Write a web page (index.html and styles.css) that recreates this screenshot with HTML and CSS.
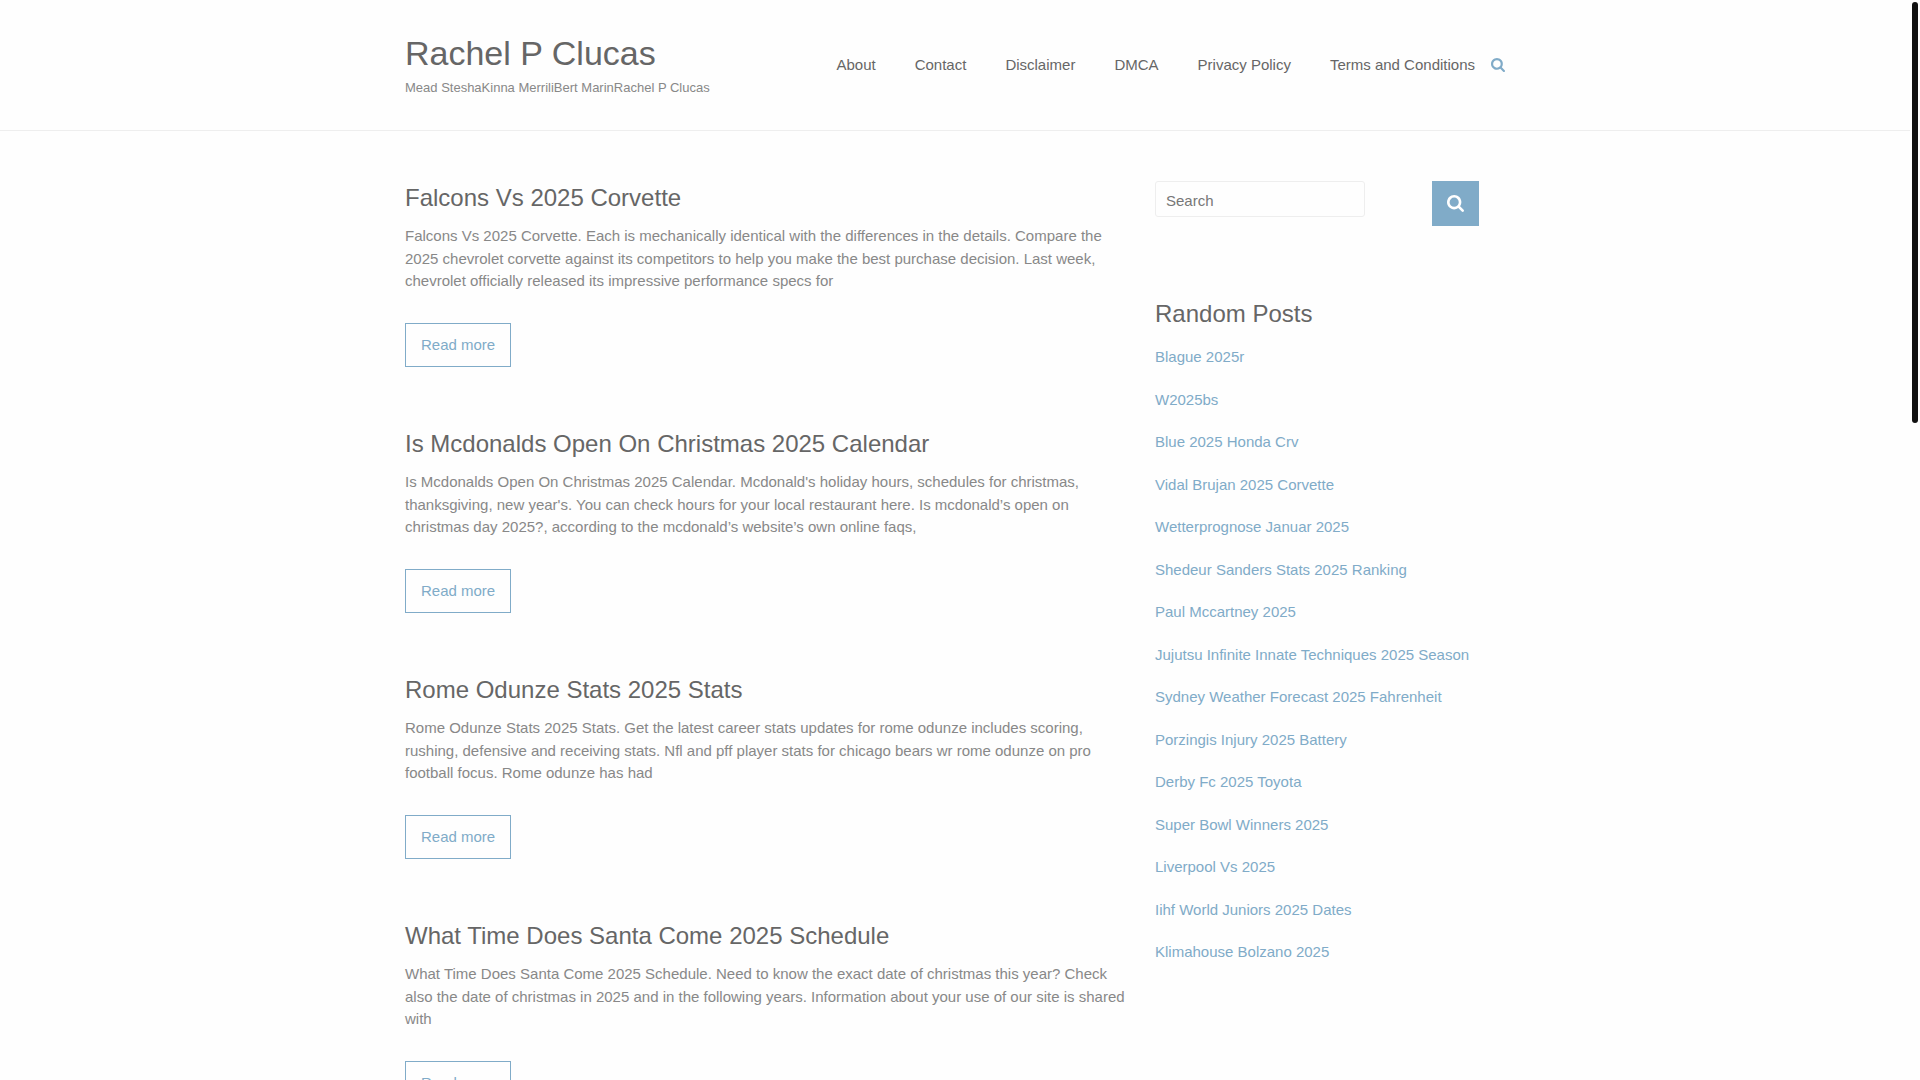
FILE: index.html
```html
<!DOCTYPE html>
<html lang="en">
<head>
<meta charset="utf-8">
<meta name="viewport" content="width=device-width, initial-scale=1">
<title>Rachel P Clucas</title>
<link rel="stylesheet" href="styles.css">
</head>
<body>
<svg class="sprite" aria-hidden="true">
  <symbol id="icon-search" viewBox="0 128 1664 1664">
    <path d="M1152 832q0-185-131.500-316.500T704 384 387.500 515.500 256 832t131.500 316.500T704 1280t316.500-131.500T1152 832zm512 832q0 52-38 90t-90 38q-54 0-90-38l-343-342q-179 124-399 124-143 0-273.500-55.500t-225-150-150-225T0 832t55.500-273.500 150-225 225-150T704 128t273.500 55.500 225 150 150 225T1408 832q0 220-124 399l343 343q37 37 37 90z"/>
  </symbol>
</svg>
<div class="page">
  <header class="site-header">
    <div class="container header-inner">
      <div class="branding">
        <h1 class="site-title"><a href="#">Rachel P Clucas</a></h1>
        <p class="site-description">Mead SteshaKinna MerriliBert MarinRachel P Clucas</p>
      </div>
      <div class="header-right">
        <nav class="main-nav" aria-label="Main">
          <a href="#">About</a>
          <a href="#">Contact</a>
          <a href="#">Disclaimer</a>
          <a href="#">DMCA</a>
          <a href="#">Privacy Policy</a>
          <a href="#">Terms and Conditions</a>
        </nav>
        <button class="search-toggle" type="button" aria-label="Open search"><svg class="icon"><use href="#icon-search"/></svg></button>
      </div>
    </div>
  </header>
  <div class="container columns">
    <main class="posts">
      <article class="post">
        <h2 class="post-title"><a href="#">Falcons Vs 2025 Corvette</a></h2>
        <p class="post-text">Falcons Vs 2025 Corvette. Each is mechanically identical with the differences in the details. Compare the 2025 chevrolet corvette against its competitors to help you make the best purchase decision. Last week, chevrolet officially released its impressive performance specs for</p>
        <a class="read-more" href="#">Read more</a>
      </article>
      <article class="post">
        <h2 class="post-title"><a href="#">Is Mcdonalds Open On Christmas 2025 Calendar</a></h2>
        <p class="post-text">Is Mcdonalds Open On Christmas 2025 Calendar. Mcdonald's holiday hours, schedules for christmas, thanksgiving, new year's. You can check hours for your local restaurant here. Is mcdonald’s open on christmas day 2025?, according to the mcdonald’s website’s own online faqs,</p>
        <a class="read-more" href="#">Read more</a>
      </article>
      <article class="post">
        <h2 class="post-title"><a href="#">Rome Odunze Stats 2025 Stats</a></h2>
        <p class="post-text">Rome Odunze Stats 2025 Stats. Get the latest career stats updates for rome odunze includes scoring, rushing, defensive and receiving stats. Nfl and pff player stats for chicago bears wr rome odunze on pro football focus. Rome odunze has had</p>
        <a class="read-more" href="#">Read more</a>
      </article>
      <article class="post">
        <h2 class="post-title"><a href="#">What Time Does Santa Come 2025 Schedule</a></h2>
        <p class="post-text">What Time Does Santa Come 2025 Schedule. Need to know the exact date of christmas this year? Check also the date of christmas in 2025 and in the following years. Information about your use of our site is shared with</p>
        <a class="read-more" href="#">Read more</a>
      </article>
    </main>
    <aside class="sidebar">
      <form class="search-form" role="search">
        <input class="search-field" type="text" placeholder="Search" aria-label="Search">
        <button class="search-submit" type="submit" aria-label="Search"><svg class="icon icon-large"><use href="#icon-search"/></svg></button>
      </form>
      <h3 class="widget-title">Random Posts</h3>
      <ul class="post-links">
        <li><a href="#">Blague 2025r</a></li>
        <li><a href="#">W2025bs</a></li>
        <li><a href="#">Blue 2025 Honda Crv</a></li>
        <li><a href="#">Vidal Brujan 2025 Corvette</a></li>
        <li><a href="#">Wetterprognose Januar 2025</a></li>
        <li><a href="#">Shedeur Sanders Stats 2025 Ranking</a></li>
        <li><a href="#">Paul Mccartney 2025</a></li>
        <li><a href="#">Jujutsu Infinite Innate Techniques 2025 Season</a></li>
        <li><a href="#">Sydney Weather Forecast 2025 Fahrenheit</a></li>
        <li><a href="#">Porzingis Injury 2025 Battery</a></li>
        <li><a href="#">Derby Fc 2025 Toyota</a></li>
        <li><a href="#">Super Bowl Winners 2025</a></li>
        <li><a href="#">Liverpool Vs 2025</a></li>
        <li><a href="#">Iihf World Juniors 2025 Dates</a></li>
        <li><a href="#">Klimahouse Bolzano 2025</a></li>
      </ul>
    </aside>
  </div>
</div>
<div class="scroll-thumb" aria-hidden="true"></div>
</body>
</html>
```
FILE: styles.css
```css
* {
  box-sizing: border-box;
}

html {
  scrollbar-width: none;
}

body {
  margin: 0;
  background: #fefefe;
  color: #888888;
  font-family: "Liberation Sans", Arial, sans-serif;
  font-size: 15px;
  line-height: 1.5;
}

h1, h2, h3, p, ul {
  margin: 0;
  padding: 0;
  font-weight: 400;
}

a {
  color: #80abc8;
  text-decoration: none;
}

.sprite {
  display: none;
}

.icon {
  display: block;
  width: 14px;
  height: 14px;
  fill: currentColor;
}

.icon-large {
  width: 17px;
  height: 17px;
}

/* room on the right for the scroll indicator */
.page {
  margin-right: 10px;
}

.container {
  max-width: 1100px;
  margin: 0 auto;
}

.site-header {
  border-bottom: 1px solid #eeeeee;
}

.header-inner {
  display: flex;
  justify-content: space-between;
  align-items: center;
}

.branding {
  padding: 28px 0 32px;
}

.site-title {
  font-size: 34px;
  line-height: 50px;
}

.site-title a,
.post-title a,
.main-nav a {
  color: #666666;
}

.site-description {
  font-size: 13px;
  line-height: 20px;
}

.header-right {
  display: flex;
  align-items: center;
  gap: 16px;
}

.main-nav {
  display: flex;
  gap: 39px;
}

.search-toggle {
  padding: 0;
  border: 0;
  background: none;
  color: #80abc8;
}

.columns {
  display: flex;
  justify-content: space-between;
  gap: 30px;
  padding-top: 50px;
}

.posts {
  flex: 1;
}

.post {
  margin-bottom: 60px;
}

.post-title {
  margin-bottom: 10px;
  font-size: 24px;
  line-height: 34px;
}

.post-text {
  margin-bottom: 30px;
}

.read-more {
  display: block;
  width: fit-content;
  padding: 10px 15px;
  border: 1px solid #80abc8;
}

.sidebar {
  width: 350px;
}

.search-form {
  display: flex;
  justify-content: space-between;
  align-items: flex-start;
  margin-right: 26px;
}

.search-field {
  width: 210px;
  height: 36px;
  padding: 2px 10px 0;
  border: 1px solid #eeeeee;
  border-radius: 3px;
  background: #fefefe;
  color: #777777;
  font: inherit;
}

.search-field::placeholder {
  color: #777777;
}

.search-submit {
  display: grid;
  place-items: center;
  width: 47px;
  height: 45px;
  padding: 0;
  border: 0;
  background: #80abc8;
  color: #ffffff;
}

.widget-title {
  margin: 70px 0 14px;
  color: #666666;
  font-size: 24px;
}

.post-links {
  display: grid;
  gap: 20px;
  list-style: none;
}

.scroll-thumb {
  position: fixed;
  top: 2px;
  right: 2px;
  width: 6px;
  height: 421px;
  border-radius: 3px;
  background: #111111;
}
```
